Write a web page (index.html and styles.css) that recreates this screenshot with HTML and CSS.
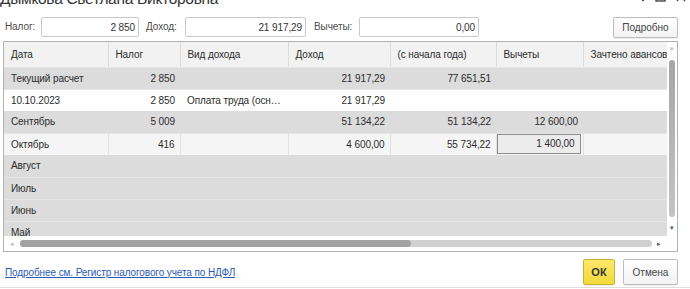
FILE: index.html
```html
<!DOCTYPE html>
<html lang="ru">
<head>
    <meta charset="UTF-8">
    <title>Дымкова Светлана Викторовна</title>
    <link rel="stylesheet" href="styles.css">
</head>
<body>
    <div class="dialog">
        <div class="titlebar">
            <h1>Дымкова Светлана Викторовна</h1>
            <div class="win-icons">
                <svg width="4" height="12" viewBox="0 0 4 12"><circle cx="2" cy="2" r="1.2"/><circle cx="2" cy="6" r="1.2"/><circle cx="2" cy="10" r="1.2"/></svg>
                <svg width="11" height="12" viewBox="0 0 11 12"><rect x="1" y="1" width="9" height="10" fill="none" stroke="#444" stroke-width="1.4"/></svg>
                <svg width="10" height="12" viewBox="0 0 10 12"><path d="M1 2 L9 11 M9 2 L1 11" stroke="#444" stroke-width="1.4"/></svg>
            </div>
        </div>

        <div class="filters">
            <label class="l-tax">Налог:</label>
            <div class="field f-tax">2 850</div>
            <label class="l-income">Доход:</label>
            <div class="field f-income">21 917,29</div>
            <label class="l-deduct">Вычеты:</label>
            <div class="field f-deduct">0,00</div>
            <button type="button" class="btn btn-more">Подробно</button>
        </div>

        <div class="grid">
            <div class="grid-body">
                <div class="grid-table">
                    <table>
                        <colgroup>
                            <col style="width:104px">
                            <col style="width:72px">
                            <col style="width:108px">
                            <col style="width:102px">
                            <col style="width:106px">
                            <col style="width:87px">
                            <col style="width:84px">
                        </colgroup>
                        <thead>
                            <tr>
                                <th>Дата</th>
                                <th>Налог</th>
                                <th>Вид дохода</th>
                                <th>Доход</th>
                                <th>(с начала года)</th>
                                <th>Вычеты</th>
                                <th>Зачтено авансов</th>
                            </tr>
                        </thead>
                        <tbody>
                            <tr class="grey">
                                <td>Текущий расчет</td>
                                <td class="num">2 850</td>
                                <td></td>
                                <td class="num">21 917,29</td>
                                <td class="num">77 651,51</td>
                                <td></td>
                                <td></td>
                            </tr>
                            <tr class="white">
                                <td>10.10.2023</td>
                                <td class="num">2 850</td>
                                <td>Оплата труда (осн…</td>
                                <td class="num">21 917,29</td>
                                <td></td>
                                <td></td>
                                <td></td>
                            </tr>
                            <tr class="grey">
                                <td>Сентябрь</td>
                                <td class="num">5 009</td>
                                <td></td>
                                <td class="num">51 134,22</td>
                                <td class="num">51 134,22</td>
                                <td class="num">12 600,00</td>
                                <td></td>
                            </tr>
                            <tr class="current">
                                <td>Октябрь</td>
                                <td class="num">416</td>
                                <td></td>
                                <td class="num">4 600,00</td>
                                <td class="num">55 734,22</td>
                                <td class="num boxed"><span class="cell-box">1 400,00</span></td>
                                <td></td>
                            </tr>
                            <tr class="grey"><td>Август</td><td></td><td></td><td></td><td></td><td></td><td></td></tr>
                            <tr class="grey"><td>Июль</td><td></td><td></td><td></td><td></td><td></td><td></td></tr>
                            <tr class="grey"><td>Июнь</td><td></td><td></td><td></td><td></td><td></td><td></td></tr>
                            <tr class="grey"><td>Май</td><td></td><td></td><td></td><td></td><td></td><td></td></tr>
                        </tbody>
                    </table>
                </div>
                <div class="vscroll">
                    <span class="arrow">&#9652;</span>
                    <div class="vthumb"></div>
                    <span class="arrow">&#9662;</span>
                </div>
            </div>
            <div class="hscroll">
                <span class="arrow">&#9666;</span>
                <div class="htrack"><div class="hthumb"></div></div>
                <span class="arrow">&#9656;</span>
            </div>
        </div>

        <div class="footer">
            <a href="#" class="link">Подробнее см. Регистр налогового учета по НДФЛ</a>
            <div class="buttons">
                <button type="button" class="btn btn-ok">ОК</button>
                <button type="button" class="btn btn-cancel">Отмена</button>
            </div>
        </div>
        <div class="bottom-line"></div>
    </div>
</body>
</html>
```

FILE: styles.css
```css
body {
    font-family: 'Liberation Sans', Arial, sans-serif;
    font-size: 10px;
    letter-spacing: -0.1px;
    color: #2b2b2b;
    background-color: #ffffff;
    margin: 0;
    overflow: hidden;
}
.dialog {
    width: 690px;
    height: 289px;
    padding: 0 12px 0 3px;
    box-sizing: border-box;
}
.titlebar {
    display: flex;
    justify-content: space-between;
    align-items: flex-start;
    height: 10px;
}
h1 {
    font-size: 15.5px;
    font-weight: normal;
    letter-spacing: -0.3px;
    line-height: 20px;
    margin: -11px 0 0 -3px;
    color: #333;
    white-space: nowrap;
}
.win-icons {
    display: flex;
    gap: 10px;
    margin-top: -10px;
    margin-right: -8px;
    fill: #444;
}
.filters {
    display: flex;
    align-items: center;
    height: 21px;
    margin-top: 6px;
    padding-left: 2px;
}
.filters label {
    color: #4d4d4d;
}
.l-tax { width: 36px; }
.l-income { width: 39px; }
.l-deduct { width: 45px; }
.field {
    height: 20px;
    line-height: 19px;
    border: 1px solid #c8c8c8;
    border-radius: 2px;
    box-sizing: border-box;
    text-align: right;
    padding-right: 3px;
    color: #333;
    margin-right: 7px;
}
.f-tax { width: 98px; }
.f-income { width: 121px; margin-right: 8px; }
.f-deduct { width: 120px; }
.btn {
    font-family: inherit;
    font-size: 10px;
    color: #444;
    background: linear-gradient(#ffffff, #f3f3f3);
    border: 1px solid #bdbdbd;
    border-radius: 2px;
    box-shadow: 0 1px 1px rgba(0, 0, 0, 0.08);
    padding: 0;
    cursor: pointer;
}
.btn-more {
    width: 65px;
    height: 21px;
    margin-left: auto;
    margin-top: 2px;
}
.grid {
    margin-top: 4px;
    border: 1px solid #b3b3b3;
    height: 211px;
    box-sizing: border-box;
}
.grid-body {
    display: flex;
    height: 194px;
    overflow: hidden;
}
.grid-table {
    width: 663px;
    overflow: hidden;
}
table {
    border-collapse: collapse;
    table-layout: fixed;
    width: 663px;
}
th, td {
    white-space: nowrap;
    overflow: hidden;
    padding: 0 5px 0 7px;
    text-align: left;
}
th {
    height: 25px;
    font-weight: normal;
    background-color: #f2f2f2;
    border-left: 1px solid #dcdcdc;
    border-bottom: 1px solid #e6e6e6;
    box-sizing: border-box;
}
th:first-child {
    border-left: none;
}
td {
    height: 22px;
    box-sizing: border-box;
}
.num {
    text-align: right;
}
tr.grey td {
    background-color: #dcdcdc;
    border-bottom: 1px solid #e6e6e6;
}
tr.white td {
    background-color: #ffffff;
}
tr.current td {
    background-color: #f5f5f5;
    border-left: 1px solid #e2e2e2;
}
tr.current td:first-child {
    border-left: none;
}
tr.current td.boxed {
    padding: 0;
}
.cell-box {
    display: block;
    height: 20px;
    line-height: 18px;
    margin: 0 2px 0 0;
    padding-right: 5px;
    border: 1px solid #8c8c8c;
    background-color: #ececec;
    box-sizing: border-box;
}
.vscroll {
    width: 10px;
    display: flex;
    flex-direction: column;
    align-items: center;
    background-color: #ffffff;
}
.arrow {
    font-size: 7px;
    line-height: 10px;
    color: #555;
}
.vscroll .arrow:first-child {
    color: #bbb;
    margin-top: 1px;
}
.vthumb {
    width: 6px;
    height: 157px;
    margin-top: 7px;
    margin-bottom: 6px;
    border-radius: 3px;
    background: linear-gradient(#a6a6a6, #c4c4c4);
}
.hscroll {
    display: flex;
    align-items: center;
    height: 15px;
    padding: 0 16px 0 6px;
}
.hscroll .arrow:first-child {
    color: #bbb;
    margin-right: 6px;
}
.htrack {
    flex: 1;
    height: 7px;
    border-radius: 4px;
    background-color: #d0d0d0;
    margin-right: 5px;
}
.hthumb {
    width: 391px;
    height: 7px;
    border-radius: 4px;
    background-color: #a3a3a3;
}
.footer {
    display: flex;
    justify-content: space-between;
    align-items: center;
    margin-top: 7px;
    padding-left: 2px;
}
.link {
    color: #2a5bb5;
    text-decoration: underline;
}
.buttons {
    display: flex;
    gap: 8px;
}
.btn-ok {
    width: 32px;
    height: 26px;
    font-weight: bold;
    font-size: 11px;
    color: #333;
    background: linear-gradient(#fde86a, #f2d93a);
    border-color: #c9b23a;
}
.btn-cancel {
    width: 55px;
    height: 26px;
}
.bottom-line {
    height: 1px;
    background-color: #dedede;
    margin: 2px -12px 0 -3px;
}
```
